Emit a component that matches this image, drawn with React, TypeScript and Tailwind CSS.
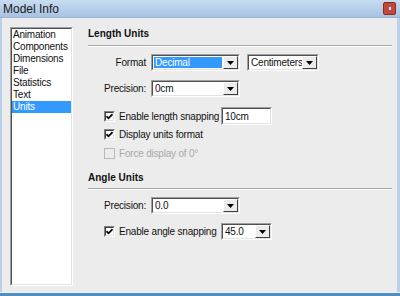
import React from "react";

const Sunken = ({ className, children }: { className: string; children?: React.ReactNode }) => (
  <div className={`border border-t-[#a0a0a0] border-l-[#a0a0a0] border-r-white border-b-white ${className}`}>
    <div className="h-full w-full border border-t-[#505050] border-l-[#505050] border-r-[#e3e3e3] border-b-[#e3e3e3] bg-white flex items-stretch">
      {children}
    </div>
  </div>
);

const Arrow = () => (
  <div className="w-[15px] shrink-0 bg-[#ececec] border border-t-white border-l-white border-r-[#404040] border-b-[#404040] flex items-center justify-center">
    <svg width="7" height="4" viewBox="0 0 7 4">
      <polygon points="0,0 7,0 3.5,4" fill="#000" />
    </svg>
  </div>
);

const Dropdown = ({ value, w, selected }: { value: string; w: string; selected?: boolean }) => (
  <Sunken className={`${w} h-[17px]`}>
    <div className="flex-1 flex items-center p-[1px] min-w-0">
      <div className={`h-full w-full flex items-center pl-[1px] leading-none ${selected ? "bg-[#3399ff] text-white" : "text-[#111]"}`}>
        {value}
      </div>
    </div>
    <Arrow />
  </Sunken>
);

const Check = ({ disabled }: { disabled?: boolean }) => (
  <div
    className={`w-[11px] h-[11px] shrink-0 border ${
      disabled
        ? "border-[#b8b8b8] bg-[#ececec]"
        : "border-t-[#808080] border-l-[#808080] border-r-white border-b-white bg-white"
    }`}
  >
    {!disabled && (
      <div className="w-full h-full border border-t-[#404040] border-l-[#404040] border-r-[#e3e3e3] border-b-[#e3e3e3] flex items-center justify-center">
        <svg width="7" height="7" viewBox="0 0 7 7">
          <polyline points="0.5,3.2 2.5,5.3 6.5,1.2" fill="none" stroke="#000" strokeWidth="1.7" />
        </svg>
      </div>
    )}
  </div>
);

const Separator = ({ className }: { className: string }) => (
  <div className={`h-[2px] border-t border-t-[#a8a8a8] border-b border-b-white ${className}`} />
);

export default function App() {
  const items = ["Animation", "Components", "Dimensions", "File", "Statistics", "Text", "Units"];
  return (
    <div className="w-[400px] h-[296px] flex flex-col bg-[#b8d0ea] font-['Liberation_Sans',Arial,sans-serif] text-[10px] tracking-[-0.2px] text-[#111] overflow-hidden">
      {/* title bar */}
      <div className="h-[18px] shrink-0 flex items-center justify-between bg-gradient-to-b from-[#c9dcf0] to-[#a7c3e2] border-b border-b-[#9bb6d4]">
        <span className="pl-[3px] text-[12px] tracking-normal leading-none text-[#1a1a1a]">Model Info</span>
        <div className="mr-[4px] w-[13px] h-[13px] rounded-[2px] bg-[#c4473b] border border-[#8c2b22] flex items-center justify-center">
          <div className="w-[4px] h-[5px] bg-[#e6dede] border border-[#a55]" />
        </div>
      </div>
      {/* body */}
      <div className="flex-1 ml-[2px] mr-[3px] bg-[#ececec] flex pl-[8px] pt-[9px] pr-[5px]">
        <div className="w-[63px] h-[259px] shrink-0 border border-t-[#a0a0a0] border-l-[#a0a0a0] border-r-white border-b-white">
          <div className="w-full h-full bg-white border border-t-[#505050] border-l-[#505050] border-r-[#e3e3e3] border-b-[#e3e3e3] flex flex-col">
            {items.map((it) => (
              <div
                key={it}
                className={`h-[12px] leading-[12px] pl-[1px] whitespace-nowrap ${it === "Units" ? "bg-[#3399ff] text-white" : "text-[#111]"}`}
              >
                {it}
              </div>
            ))}
          </div>
        </div>
        <div className="flex-1 ml-[15px] pt-[1px] flex flex-col">
          <div className="h-[12px] leading-[12px] font-bold text-[10px] tracking-normal">Length Units</div>
          <Separator className="mt-[5px]" />
          <div className="mt-[7px] flex items-center">
            <div className="w-[58px] text-right">Format</div>
            <div className="ml-[5px]">
              <Dropdown value="Decimal" w="w-[89px]" selected />
            </div>
            <div className="ml-[7px]">
              <Dropdown value="Centimeters" w="w-[72px]" />
            </div>
          </div>
          <div className="mt-[9px] flex items-center">
            <div className="w-[58px] text-right">Precision:</div>
            <div className="ml-[5px]">
              <Dropdown value="0cm" w="w-[89px]" />
            </div>
          </div>
          <div className="mt-[10px] h-[18px] flex items-center">
            <div className="ml-[16px] w-[117px] flex items-center">
              <Check />
              <span className="ml-[4px] whitespace-nowrap">Enable length snapping</span>
            </div>
            <Sunken className="w-[51px] h-[18px]">
              <div className="flex items-center pl-[2px]">10cm</div>
            </Sunken>
          </div>
          <div className="mt-[4px] h-[11px] flex items-center ml-[16px]">
            <Check />
            <span className="ml-[4px]">Display units format</span>
          </div>
          <div className="mt-[8px] h-[11px] flex items-center ml-[16px]">
            <Check disabled />
            <span className="ml-[4px] text-[#a8a8a8]">Force display of 0°</span>
          </div>
          <div className="mt-[13px] h-[12px] leading-[12px] font-bold text-[10px] tracking-normal">Angle Units</div>
          <Separator className="mt-[4px]" />
          <div className="mt-[7px] flex items-center">
            <div className="w-[58px] text-right">Precision:</div>
            <div className="ml-[5px]">
              <Dropdown value="0.0" w="w-[89px]" />
            </div>
          </div>
          <div className="mt-[9px] h-[17px] flex items-center">
            <div className="ml-[16px] w-[117px] flex items-center">
              <Check />
              <span className="ml-[4px] whitespace-nowrap">Enable angle snapping</span>
            </div>
            <Dropdown value="45.0" w="w-[51px]" />
          </div>
        </div>
      </div>
      <div className="h-[4px] shrink-0 border-t border-t-[#f4f4f4] bg-[#4a8fc6]" />
    </div>
  );
}
